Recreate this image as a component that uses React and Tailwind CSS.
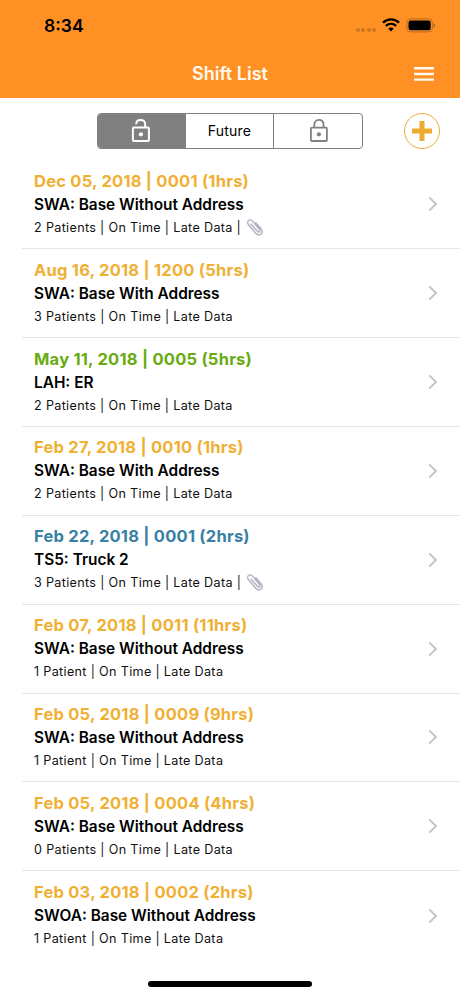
import React from 'react';

const shifts = [
  { date: 'Dec 05, 2018 | 0001 (1hrs)', title: 'SWA: Base Without Address', meta: '2 Patients | On Time | Late Data', color: 'text-[#f0b034]', attachment: true },
  { date: 'Aug 16, 2018 | 1200 (5hrs)', title: 'SWA: Base With Address', meta: '3 Patients | On Time | Late Data', color: 'text-[#f0b034]' },
  { date: 'May 11, 2018 | 0005 (5hrs)', title: 'LAH: ER', meta: '2 Patients | On Time | Late Data', color: 'text-[#68ab12]' },
  { date: 'Feb 27, 2018 | 0010 (1hrs)', title: 'SWA: Base With Address', meta: '2 Patients | On Time | Late Data', color: 'text-[#f0b034]' },
  { date: 'Feb 22, 2018 | 0001 (2hrs)', title: 'TS5: Truck 2', meta: '3 Patients | On Time | Late Data', color: 'text-[#3880a4]', attachment: true },
  { date: 'Feb 07, 2018 | 0011 (11hrs)', title: 'SWA: Base Without Address', meta: '1 Patient | On Time | Late Data', color: 'text-[#f0b034]' },
  { date: 'Feb 05, 2018 | 0009 (9hrs)', title: 'SWA: Base Without Address', meta: '1 Patient | On Time | Late Data', color: 'text-[#f0b034]' },
  { date: 'Feb 05, 2018 | 0004 (4hrs)', title: 'SWA: Base Without Address', meta: '0 Patients | On Time | Late Data', color: 'text-[#f0b034]' },
  { date: 'Feb 03, 2018 | 0002 (2hrs)', title: 'SWOA: Base Without Address', meta: '1 Patient | On Time | Late Data', color: 'text-[#f0b034]' },
];

function LockIcon({ open = false }) {
  return (
    <svg width="20" height="26" viewBox="0 0 20 26" fill="none" stroke="currentColor" strokeWidth={open ? 2 : 1.8}>
      <rect x="1.9" y="9.6" width="16" height="13.4" rx="1" />
      <path d={open ? 'M5.2 6.2C5.2 3.6 7 1.9 9.6 1.9s4.6 1.7 4.6 4.3v3.4' : 'M5.3 9.6V6.7c0-2.8 1.8-4.8 4.6-4.8s4.6 2 4.6 4.8v2.9'} />
      <circle cx="9.9" cy="16.3" r="2.1" fill="currentColor" stroke="none" />
    </svg>
  );
}

function Paperclip() {
  const wire =
    'M5.2 6.2l6.2 7.1c1.6 1.7 3.5-.1 2.1-1.8L6.6 3.2C3.9.2-.2 3.4 2.4 6.5l7.4 8.7c3.4 3.8 8.7-.2 5.4-4.2L9.8 4.8';
  return (
    <svg className="ml-[5px] mb-px" width="18" height="18" viewBox="0 0 18 18" fill="none" strokeLinecap="round">
      <path d={wire} stroke="#9a9fad" strokeWidth="1.3" />
      <path d={wire} stroke="#d5d9e2" strokeWidth="0.6" />
    </svg>
  );
}

function StatusBar() {
  return (
    <div className="flex h-[50px] items-center justify-between pl-[44px] pr-[24px] text-black">
      <span className="pt-[2px] text-[17.5px] font-semibold leading-none">8:34</span>
      <div className="flex items-center">
        <div className="mr-[6px] mt-[9px] flex gap-[1.5px]">
          {[0, 1, 2, 3].map((i) => (
            <span key={i} className="size-1 rounded-full bg-[#cb7722]" />
          ))}
        </div>
        <svg className="mr-[6px]" width="18" height="14" viewBox="0 0 18 14">
          <path d="M1 4.6C5.6.3 12.4.3 17 4.6" fill="none" stroke="currentColor" strokeWidth="2.3" />
          <path d="M3.9 7.9c3-2.7 7.2-2.7 10.2 0" fill="none" stroke="currentColor" strokeWidth="2.2" />
          <path d="M6.3 10.6c1.6-1.4 3.8-1.4 5.4 0L9 13.5z" fill="currentColor" />
        </svg>
        <svg width="30" height="15" viewBox="0 0 30 15">
          <rect x="0.9" y="0.9" width="25.4" height="13" rx="3.7" fill="none" stroke="#b96a1c" strokeWidth="1" />
          <rect x="2.5" y="2.5" width="22.2" height="9.8" rx="2.3" fill="currentColor" />
          <path d="M27.6 5.2c2 .8 2 3.8 0 4.6z" fill="#a85f18" />
        </svg>
      </div>
    </div>
  );
}

function ShiftRow({ shift, last }) {
  return (
    <li className={`flex h-[88.85px] items-center pl-3 pr-[22px] ${last ? '' : 'border-b border-[#e6e6e6]'}`}>
      <div className="flex-1 whitespace-nowrap">
        <p className={`text-[16.5px] font-bold leading-[23px] tracking-[0.23px] ${shift.color}`}>{shift.date}</p>
        <p className="text-[15.4px] font-semibold leading-[23px] text-black">{shift.title}</p>
        <p className="flex h-[23px] items-center text-[12.6px] leading-[23px] tracking-[0.33px] text-[#111]">
          {shift.meta}
          {shift.attachment && (
            <>
              <span>&nbsp;|</span>
              <Paperclip />
            </>
          )}
        </p>
      </div>
      <svg width="10" height="16" viewBox="0 0 10 16" fill="none" stroke="#c4c4c6" strokeWidth="2">
        <path d="M1.2 1.4L8 8l-6.8 6.6" />
      </svg>
    </li>
  );
}

export default function App() {
  return (
    <div className="relative h-[996px] w-[460px] overflow-hidden bg-white font-['Inter',sans-serif]">
      <header className="h-[98px] bg-[#ff9124]">
        <StatusBar />
        <div className="grid h-[48px] grid-cols-[1fr_auto_1fr] items-center px-[26px]">
          <h1 className="col-start-2 text-[18px] font-semibold leading-none text-[#fff8ee]">Shift List</h1>
          <button className="justify-self-end text-[#fff8ee]" aria-label="Menu">
            <svg width="20" height="16" viewBox="0 0 20 16" fill="none" stroke="currentColor" strokeWidth="2.4">
              <path d="M0 2.2h20M0 8h20M0 13.6h20" />
            </svg>
          </button>
        </div>
      </header>

      <div className="flex h-[62.5px] items-center justify-between pb-0 pl-[97px] pr-5 pt-[3px]">
        <div className="grid h-9 w-[266px] grid-cols-3 overflow-hidden rounded border border-[#808080] text-[#808080]">
          <button className="flex items-center justify-center bg-[#808080] pr-[2px] text-white">
            <LockIcon open />
          </button>
          <button className="border-r border-[#808080] text-[14px] tracking-[0.2px] text-black">Future</button>
          <button className="flex items-center justify-center pl-[2px]">
            <LockIcon />
          </button>
        </div>
        <button className="flex size-9 items-center justify-center rounded-full border-[1.5px] border-[#edab32] text-[#edab32]" aria-label="Add">
          <svg width="22" height="22" viewBox="0 0 22 22" fill="none" stroke="currentColor" strokeWidth="5">
            <path d="M11 1v20M1 11h20" />
          </svg>
        </button>
      </div>

      <ul className="pl-[22px]">
        {shifts.map((shift, i) => (
          <ShiftRow key={shift.date} shift={shift} last={i === shifts.length - 1} />
        ))}
      </ul>

      {/* Home indicator */}
      <div className="absolute bottom-[9px] left-[148px] h-[6px] w-[164px] rounded-full bg-black" />
    </div>
  );
}
